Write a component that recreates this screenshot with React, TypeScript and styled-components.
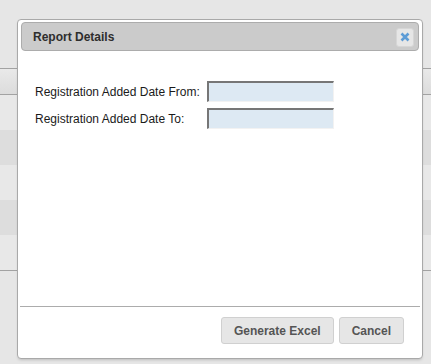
import React from "react";
import styled, { createGlobalStyle } from "styled-components";

const GlobalStyle = createGlobalStyle`
  html, body { margin: 0; padding: 0; }
  body {
    background: #e6e6e6;
    font-family: "Liberation Sans", Arial, sans-serif;
    width: 431px;
    height: 364px;
    overflow: hidden;
  }
`;

const Page = styled.div`
  position: relative;
  width: 431px;
  height: 364px;
  display: flex;
  flex-direction: column;
`;

const TopSpace = styled.div`
  height: 68px;
  flex: none;
`;

const GridHeader = styled.div`
  height: 27px;
  box-sizing: border-box;
  border-top: 1px solid #a2a2a2;
  border-bottom: 1px solid #a2a2a2;
  background: linear-gradient(#e9e9e9, #dcdcdc);
  flex: none;
`;

const GridRow = styled.div<{ $alt?: boolean }>`
  height: 35px;
  flex: none;
  background: ${(p) => (p.$alt ? "#dddddd" : "#e8e8e8")};
`;

const GridEnd = styled.div`
  border-top: 1px solid #a2a2a2;
  flex: 1;
`;

const Dialog = styled.div`
  position: absolute;
  left: 17px;
  top: 19px;
  width: 406px;
  height: 340px;
  box-sizing: border-box;
  border: 1px solid #a9a9a9;
  border-radius: 4px;
  background: #ffffff;
  padding: 2px 3px;
  display: flex;
  flex-direction: column;
  box-shadow: 0 2px 3px -1px rgba(0, 0, 0, 0.18);
`;

const TitleBar = styled.div`
  height: 29px;
  box-sizing: border-box;
  border: 1px solid #acacac;
  border-radius: 4px;
  background: #cbcbcb;
  display: flex;
  align-items: center;
  justify-content: space-between;
  padding: 0 4px 0 11px;
  flex: none;
`;

const Title = styled.span`
  font-size: 12px;
  font-weight: bold;
  color: #2e2e2e;
`;

const CloseButton = styled.button`
  width: 18px;
  height: 19px;
  margin-top: 1px;
  box-sizing: border-box;
  border: 1px solid #d6d6d6;
  border-radius: 3px;
  background: #e6e6e6;
  padding: 0;
  display: flex;
  align-items: center;
  justify-content: center;
`;

const Content = styled.div`
  flex: 1;
  padding: 30px 0 0 14px;
`;

const Form = styled.div`
  display: grid;
  grid-template-columns: max-content max-content;
  column-gap: 7px;
  row-gap: 6px;
  align-items: center;
`;

const Label = styled.label`
  font-size: 12px;
  color: #1a1a1a;
`;

const DateInput = styled.input`
  width: 127px;
  height: 21px;
  box-sizing: border-box;
  border-style: solid;
  border-width: 2px 1px 1px 2px;
  border-color: #767676 #f2f2f2 #f2f2f2 #767676;
  background: #dde9f3;
  margin: 0;
  padding: 0 3px;
  font-family: inherit;
  font-size: 12px;
`;

const Footer = styled.div`
  flex: none;
  margin: 0 -1px;
  border-top: 1px solid #acacac;
  display: flex;
  justify-content: flex-end;
  gap: 5px;
  padding: 10px 16px 12px;
`;

const Button = styled.button`
  height: 27px;
  box-sizing: border-box;
  padding: 0 12px;
  border: 1px solid #d0d0d0;
  border-radius: 3px;
  background: #e6e6e6;
  color: #555555;
  font-family: "Liberation Sans", Arial, sans-serif;
  font-size: 12px;
  font-weight: bold;
`;

const CloseIcon = () => (
  <svg width="10" height="10" viewBox="0 0 10 10">
    <path
      d="M1.5 1.5 L8.5 8.5 M8.5 1.5 L1.5 8.5"
      stroke="#5d9cd6"
      strokeWidth="2.6"
      strokeLinecap="butt"
    />
  </svg>
);

export default function App() {
  return (
    <>
      <GlobalStyle />
      <Page>
        <TopSpace />
        <GridHeader />
        <GridRow />
        <GridRow $alt />
        <GridRow />
        <GridRow $alt />
        <GridRow />
        <GridEnd />
        <Dialog>
          <TitleBar>
            <Title>Report Details</Title>
            <CloseButton aria-label="Close">
              <CloseIcon />
            </CloseButton>
          </TitleBar>
          <Content>
            <Form>
              <Label>Registration Added Date From:</Label>
              <DateInput type="text" />
              <Label>Registration Added Date To:</Label>
              <DateInput type="text" />
            </Form>
          </Content>
          <Footer>
            <Button>Generate Excel</Button>
            <Button>Cancel</Button>
          </Footer>
        </Dialog>
      </Page>
    </>
  );
}
